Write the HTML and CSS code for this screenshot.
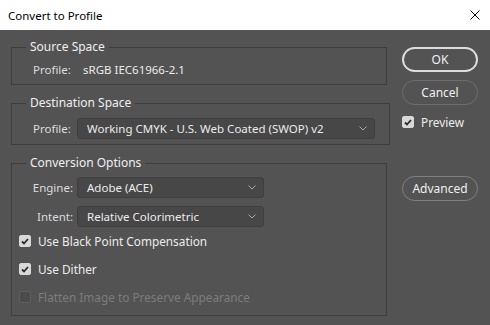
FILE: index.html
```html
<!DOCTYPE html>
<html lang="en">

<head>
    <meta charset="UTF-8">
    <meta name="viewport" content="width=device-width, initial-scale=1.0">
    <title>Convert to Profile</title>
    <link rel="stylesheet" href="styles.css">
</head>

<body>
    <div class="titlebar">
        <span class="title">Convert to Profile</span>
        <svg class="close" width="10" height="10" viewBox="0 0 10 10">
            <path d="M0.5 0.5 L9.5 9.5 M9.5 0.5 L0.5 9.5" stroke="#000" stroke-width="1" fill="none" />
        </svg>
    </div>

    <div class="dialog">
        <div class="main">
            <fieldset class="group group-source">
                <legend>Source Space</legend>
                <div class="row">
                    <span class="label">Profile:</span>
                    <span class="value">sRGB IEC61966-2.1</span>
                </div>
            </fieldset>

            <fieldset class="group group-dest">
                <legend>Destination Space</legend>
                <div class="row">
                    <span class="label">Profile:</span>
                    <div class="select select-wide">
                        <span>Working CMYK - U.S. Web Coated (SWOP) v2</span>
                        <svg class="chevron" width="8" height="5" viewBox="0 0 8 5">
                            <path d="M0.5 0.5 L4 4 L7.5 0.5" stroke="#a8a8a8" fill="none" />
                        </svg>
                    </div>
                </div>
            </fieldset>

            <fieldset class="group group-options">
                <legend>Conversion Options</legend>
                <div class="row">
                    <span class="label label-right">Engine:</span>
                    <div class="select select-short">
                        <span>Adobe (ACE)</span>
                        <svg class="chevron" width="8" height="5" viewBox="0 0 8 5">
                            <path d="M0.5 0.5 L4 4 L7.5 0.5" stroke="#a8a8a8" fill="none" />
                        </svg>
                    </div>
                </div>
                <div class="row row-gap">
                    <span class="label label-right">Intent:</span>
                    <div class="select select-short">
                        <span>Relative Colorimetric</span>
                        <svg class="chevron" width="8" height="5" viewBox="0 0 8 5">
                            <path d="M0.5 0.5 L4 4 L7.5 0.5" stroke="#a8a8a8" fill="none" />
                        </svg>
                    </div>
                </div>
                <div class="check check-first">
                    <span class="box checked">
                        <svg width="8" height="7" viewBox="0 0 8 7">
                            <path d="M1 3.5 L3 5.5 L7 1" stroke="#2a2a2a" stroke-width="1.8" fill="none" />
                        </svg>
                    </span>
                    <span>Use Black Point Compensation</span>
                </div>
                <div class="check">
                    <span class="box checked">
                        <svg width="8" height="7" viewBox="0 0 8 7">
                            <path d="M1 3.5 L3 5.5 L7 1" stroke="#2a2a2a" stroke-width="1.8" fill="none" />
                        </svg>
                    </span>
                    <span>Use Dither</span>
                </div>
                <div class="check disabled">
                    <span class="box"></span>
                    <span>Flatten Image to Preserve Appearance</span>
                </div>
            </fieldset>
        </div>

        <div class="side">
            <button class="btn btn-default">OK</button>
            <button class="btn btn-cancel">Cancel</button>
            <div class="check check-preview">
                <span class="box checked">
                    <svg width="8" height="7" viewBox="0 0 8 7">
                        <path d="M1 3.5 L3 5.5 L7 1" stroke="#2a2a2a" stroke-width="1.8" fill="none" />
                    </svg>
                </span>
                <span>Preview</span>
            </div>
            <button class="btn btn-advanced">Advanced</button>
        </div>
    </div>
</body>

</html>
```

FILE: styles.css
```css
body {
    margin: 0;
    width: 490px;
    height: 325px;
    overflow: hidden;
    background-color: #535353;
    font-family: "Noto Sans", "DejaVu Sans", sans-serif;
    font-size: 11.5px;
    color: #ececec;
}

.titlebar {
    height: 30px;
    background: #ffffff;
    display: flex;
    align-items: center;
    justify-content: space-between;
    padding: 0 10px 0 8px;
    box-sizing: border-box;
}

.title {
    color: #000;
    font-size: 11.5px;
}

.close {
    display: block;
}

.dialog {
    display: flex;
}

.main {
    width: 376px;
    margin-left: 11px;
    padding-top: 9px;
}

.group {
    margin: 0;
    border: 1px solid #3d3d3d;
    padding: 7px 14px 6px 14px;
}

.group legend {
    padding: 0 4px;
    line-height: 16px;
    font-size: 12px;
    color: #f0f0f0;
}

.group-dest,
.group-options {
    margin-top: 10px;
}

.group-dest {
    padding-bottom: 5px;
}

.group-options {
    padding-top: 6px;
    padding-bottom: 10px;
}

.row {
    display: flex;
    align-items: center;
    line-height: 16px;
}

.row-gap {
    margin-top: 8px;
}

.label {
    color: #dcdcdc;
    margin-left: 7px;
    width: 40px;
    flex: none;
}

.label-right {
    margin-left: 0;
    width: 47px;
    text-align: right;
}

.value {
    margin-left: 10px;
}

.select {
    margin-left: 4px;
    height: 21px;
    box-sizing: border-box;
    background: #474747;
    border: 1px solid #3f3f3f;
    border-radius: 3px;
    display: flex;
    align-items: center;
    justify-content: space-between;
    padding: 0 7px 0 9px;
}

.select-wide {
    width: 298px;
}

.select-short {
    width: 187px;
}

.chevron {
    display: block;
}

.check {
    display: flex;
    align-items: center;
    gap: 7px;
    margin-left: -7px;
    height: 16px;
    margin-top: 12px;
    font-size: 11.8px;
}

.check-first {
    margin-top: 6px;
}

.box {
    width: 12px;
    height: 12px;
    box-sizing: border-box;
    border-radius: 2px;
    background: #4b4b4b;
    border: 1px solid #5e5e5e;
    display: flex;
    align-items: center;
    justify-content: center;
    flex: none;
}

.box.checked {
    background: #d8d8d8;
    border-color: #d8d8d8;
}

.disabled {
    color: #7c7c7c;
}

.side {
    margin-left: 15px;
    padding-top: 17px;
    display: flex;
    flex-direction: column;
    width: 76px;
}

.btn {
    width: 76px;
    height: 25px;
    border-radius: 13px;
    background: transparent;
    font-family: inherit;
    font-size: 12px;
    color: #f0f0f0;
    padding: 0;
    border: 1px solid #6e6e6e;
}

.btn-default {
    border-color: #dcdcdc;
    border-width: 2px;
}

.btn-cancel {
    margin-top: 8px;
}

.check-preview {
    margin-left: 0;
    margin-top: 9px;
    gap: 7px;
}

.btn-advanced {
    margin-top: 46px;
    border-color: #808080;
}
```
